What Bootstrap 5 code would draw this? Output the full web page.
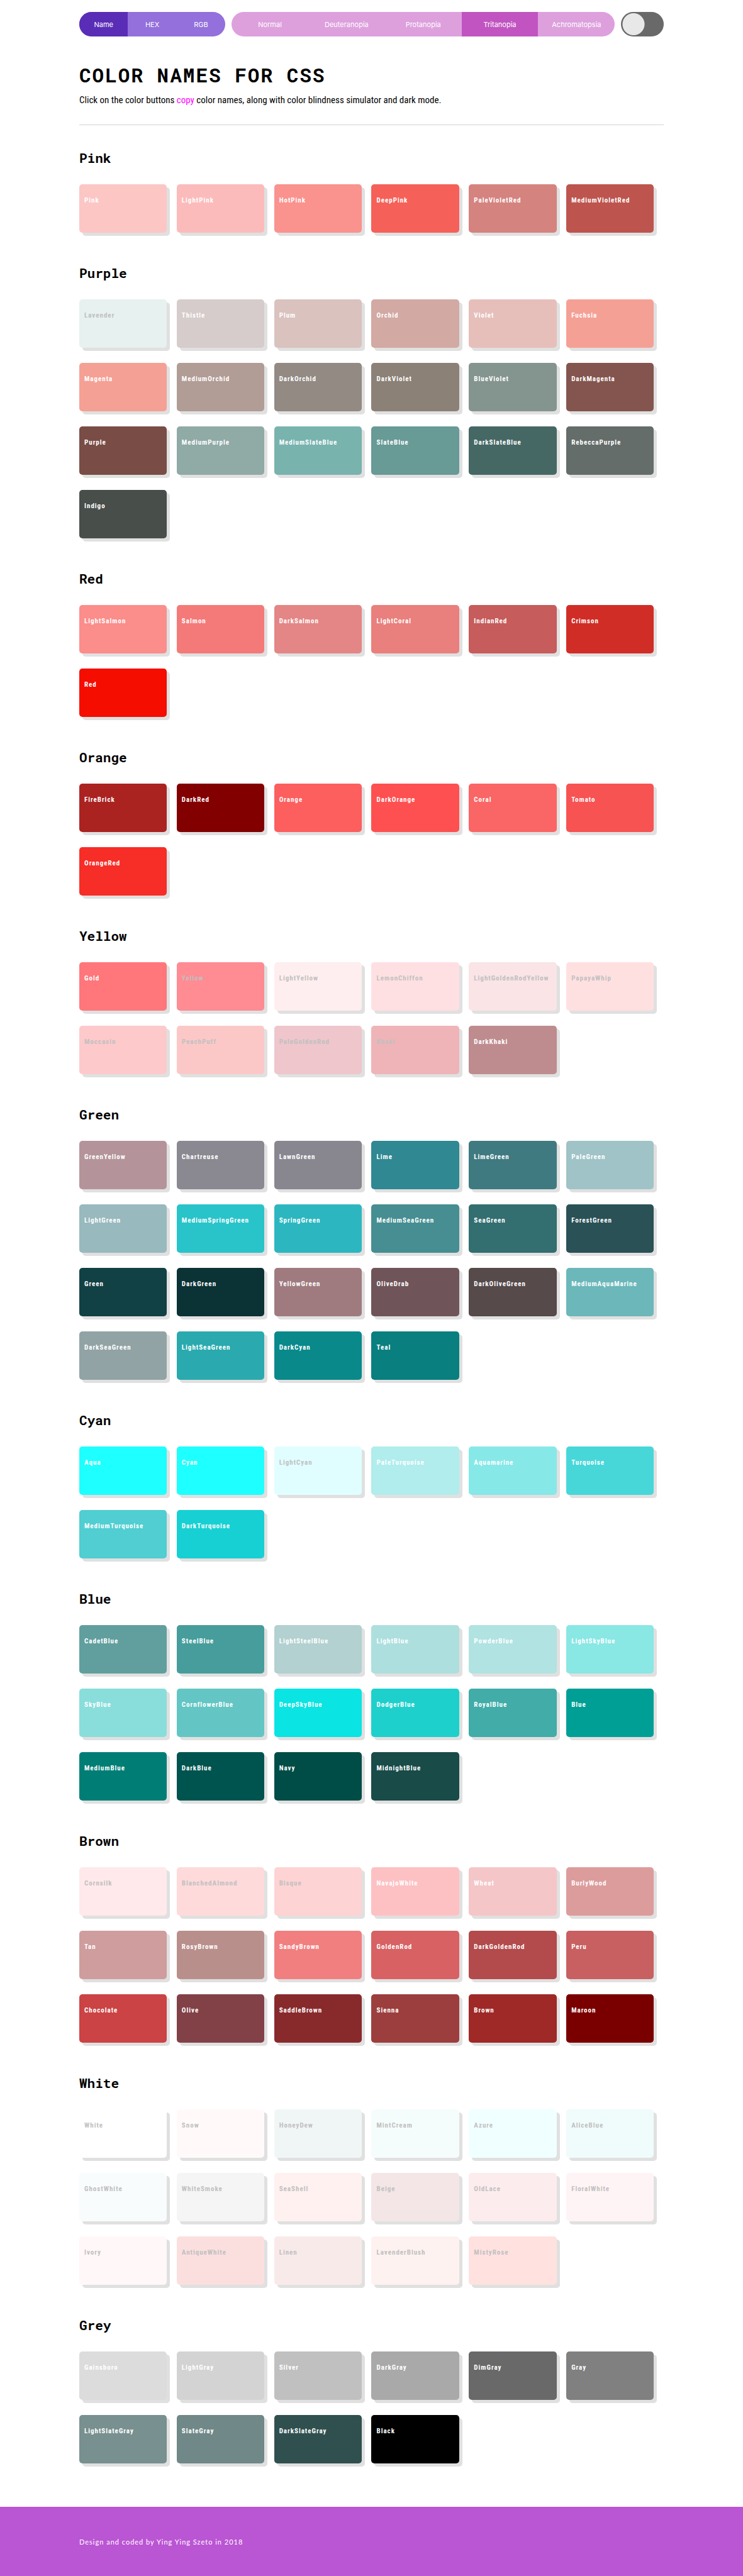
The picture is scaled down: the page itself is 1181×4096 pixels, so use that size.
<!DOCTYPE html>
<html lang="en">
<head>
<meta charset="utf-8">
<meta name="viewport" content="width=device-width, initial-scale=1">
<title>Color Names for CSS</title>
<link href="https://cdn.jsdelivr.net/npm/bootstrap@5.3.0/dist/css/bootstrap.min.css" rel="stylesheet">
<style>
  body { font-family: "Roboto Condensed", Roboto, "Liberation Sans", sans-serif; color: #000; background: #fff; }
  .page-wrap { width: 100%; max-width: 929px; margin: 0 auto; }
  .top-bar { padding-top: 19px; gap: 10px; }
  .pill { height: 39px; border-radius: 20px; overflow: hidden; flex-basis: 0; min-width: 0; }
  .pill-format { flex-grow: 24; background: #9370db; }
  .pill-vision { flex-grow: 63; background: #dda0dd; }
  .pill .btn { flex: 1 1 0; min-width: 0; padding: 0; border: 0; border-radius: 0; color: #fff; font: 400 11px/41px Inter, Roboto, sans-serif; }
  .pill-format .active { background: #5a2db6; }
  .pill-vision .active { background: #c154c1; }
  .dark-switch { flex: 7 1 0; }
  .dark-switch .form-check-input { display: block; float: none; width: 100%; height: 39px; margin: 0; border: 0; border-radius: 20px; background: #696969 radial-gradient(circle 18px at 20px 50%, #e8e8e8 17px, transparent 18px) no-repeat; }
  .page-title { font: 700 31px/40px "Roboto Mono", "Liberation Mono", monospace; letter-spacing: 2px; margin: 41px 0 0; }
  .intro { font-size: 15px; line-height: 24px; margin: 8px 0 0; }
  .copy-word { color: #f0f; }
  .rule { border: 0; border-top: 1px solid #d3d3d3; opacity: 1; margin: 27px 0 0; }
  .group-title { font: 700 21px/30px "Roboto Mono", "Liberation Mono", monospace; margin: 0 0 27px; }
  .first-group { padding-top: 37px; }
  .swatches { row-gap: 24px; column-gap: 1.667%; padding-bottom: 49px; }
  .swatch { width: 15%; height: 77px; padding: 18px 0 0 8px; border: 0; border-radius: 5px; box-shadow: 5px 5px 0 #e0e0e0; color: #fff; display: flex; align-items: flex-start; font-size: 11px; line-height: 16px; font-weight: 700; letter-spacing: 1px; white-space: nowrap; }
  .swatch-pale { color: #c0c0c0; }
  .site-footer { background: #ba55d3; color: #fff; padding: 48px 0 46px; margin-top: 20px; font: 400 11px/16px Lato, "Liberation Sans", sans-serif; letter-spacing: 1px; }
</style>
<script src="https://cdn.jsdelivr.net/npm/bootstrap@5.3.0/dist/js/bootstrap.bundle.min.js"></script>
</head>
<body>
<header class="page-wrap">
  <nav class="top-bar d-flex" aria-label="Display options">
    <div class="pill pill-format d-flex" role="group" aria-label="Format">
      <button type="button" class="btn active">Name</button>
      <button type="button" class="btn">HEX</button>
      <button type="button" class="btn">RGB</button>
    </div>
    <div class="pill pill-vision d-flex" role="group" aria-label="Color vision">
      <button type="button" class="btn">Normal</button>
      <button type="button" class="btn">Deuteranopia</button>
      <button type="button" class="btn">Protanopia</button>
      <button type="button" class="btn active">Tritanopia</button>
      <button type="button" class="btn">Achromatopsia</button>
    </div>
    <div class="dark-switch">
      <input class="form-check-input" type="checkbox" role="switch" aria-label="Dark mode">
    </div>
  </nav>
  <h1 class="page-title">COLOR NAMES FOR CSS</h1>
  <p class="intro">Click on the color buttons <span class="copy-word">copy</span> color names, along with color blindness simulator and dark mode.</p>
  <hr class="rule">
</header>
<main class="page-wrap first-group" id="groups"></main>
<footer class="site-footer"><div class="page-wrap">Design and coded by Ying Ying Szeto in 2018</div></footer>
<script>
// Each entry is "Name color"; a trailing * gives the label its grey, pale-background color.
const groups = {
  Pink: "Pink fcc6c5,LightPink fcbbbb,HotPink fa928e,DeepPink f56159,PaleVioletRed d5837f,MediumVioletRed bd554e",
  Purple: "Lavender e7f1ef *,Thistle d6cccb,Plum dac2be,Orchid d2a9a3,Violet e6bfbb,Fuchsia f5a095,Magenta f5a095,MediumOrchid b19d95,DarkOrchid 928a83,DarkViolet 8b8177,BlueViolet 84958f,DarkMagenta 84554e,Purple 794c46,MediumPurple 90aaa6,MediumSlateBlue 78b3ae,SlateBlue 689a96,DarkSlateBlue 466865,RebeccaPurple 646d69,Indigo 484e4a",
  Red: "LightSalmon fb8d8b,Salmon f47a79,DarkSalmon e48685,LightCoral e9807d,IndianRed c65c5b,Crimson d12d27,Red f50d00",
  Orange: "FireBrick aa2321,DarkRed 820000,Orange fd5e5e,DarkOrange fe5050,Coral fa6665,Tomato f75352,OrangeRed f72d27",
  Yellow: "Gold ff767b,Yellow ff8b93 *,LightYellow ffeeef *,LemonChiffon ffe0e2 *,LightGoldenRodYellow fae4e6 *,PapayaWhip ffe0e1 *,Moccasin fec9cb *,PeachPuff fcc8c7 *,PaleGoldenRod eec6cb *,Khaki efb4b8 *,DarkKhaki be8c8f",
  Green: "GreenYellow b4949a,Chartreuse 8a8891,LawnGreen 888790,Lime 308892,LimeGreen 407a81,PaleGreen 9fc3c7,LightGreen 98b9be,MediumSpringGreen 28c4ca,SpringGreen 2cb7c0,MediumSeaGreen 468e92,SeaGreen 336e70,ForestGreen 2a5156,Green 124145,DarkGreen 0b3235,YellowGreen 9f7b80,OliveDrab 6f5559,DarkOliveGreen 564a4b,MediumAquaMarine 6bb7ba,DarkSeaGreen 91a3a5,LightSeaGreen 2aaaae,DarkCyan 0a898b,Teal 0a7f7f",
  Cyan: "Aqua 1effff,Cyan 1effff,LightCyan e0feff *,PaleTurquoise b0edec,Aquamarine 87e8e8,Turquoise 47d7d9,MediumTurquoise 50ced1,DarkTurquoise 17d0d3",
  Blue: "CadetBlue 619f9e,SteelBlue 479d9b,LightSteelBlue b2d1d0,LightBlue addfde,PowderBlue b0e3e1,LightSkyBlue 89e7e4,SkyBlue 89dedc,CornflowerBlue 63c6c4,DeepSkyBlue 0ae4e3,DodgerBlue 1dd0cc,RoyalBlue 41aca8,Blue 009f96,MediumBlue 007e76,DarkBlue 00544f,Navy 004d47,MidnightBlue 194b48",
  Brown: "Cornsilk ffe9eb *,BlanchedAlmond fedada *,Bisque fed3d3 *,NavajoWhite fdc1c3,Wheat f4c6c8,BurlyWood dc9c9c,Tan cf9d9d,RosyBrown b98f8c,SandyBrown f17f80,GoldenRod d86163,DarkGoldenRod b34a4b,Peru c86061,Chocolate cb4344,Olive 824147,SaddleBrown 882a2c,Sienna 9c3e3d,Brown 9f2927,Maroon 7a0000",
  White: "White ffffff *,Snow fffaf9 *,HoneyDew f0f6f6 *,MintCream f5fdfc *,Azure f0ffff *,AliceBlue f0fbfb *,GhostWhite f8fcfd *,WhiteSmoke f5f5f5 *,SeaShell fef1f0 *,Beige f4e6e7 *,OldLace fdecee *,FloralWhite fff4f5 *,Ivory fff7f8 *,AntiqueWhite fbdfdf *,Linen f9eaea *,LavenderBlush fdf2f0 *,MistyRose ffe1e0 *",
  Grey: "Gainsboro dcdcdc,LightGray d3d3d3,Silver c0c0c0,DarkGray a9a9a9,DimGray 696969,Gray 808080,LightSlateGray 78908f,SlateGray 708887,DarkSlateGray 30504f,Black 000000"
};
const root = document.getElementById("groups");
for (const [title, list] of Object.entries(groups)) {
  const section = document.createElement("section");
  const heading = document.createElement("h2");
  heading.className = "group-title";
  heading.textContent = title;
  const box = document.createElement("div");
  box.className = "swatches d-flex flex-wrap";
  for (const item of list.split(",")) {
    const [name, hex, pale] = item.split(" ");
    const button = document.createElement("button");
    button.type = "button";
    button.className = "swatch" + (pale ? " swatch-pale" : "");
    button.style.backgroundColor = "#" + hex;
    button.textContent = name;
    box.append(button);
  }
  section.append(heading, box);
  root.append(section);
}
</script>
</body>
</html>
